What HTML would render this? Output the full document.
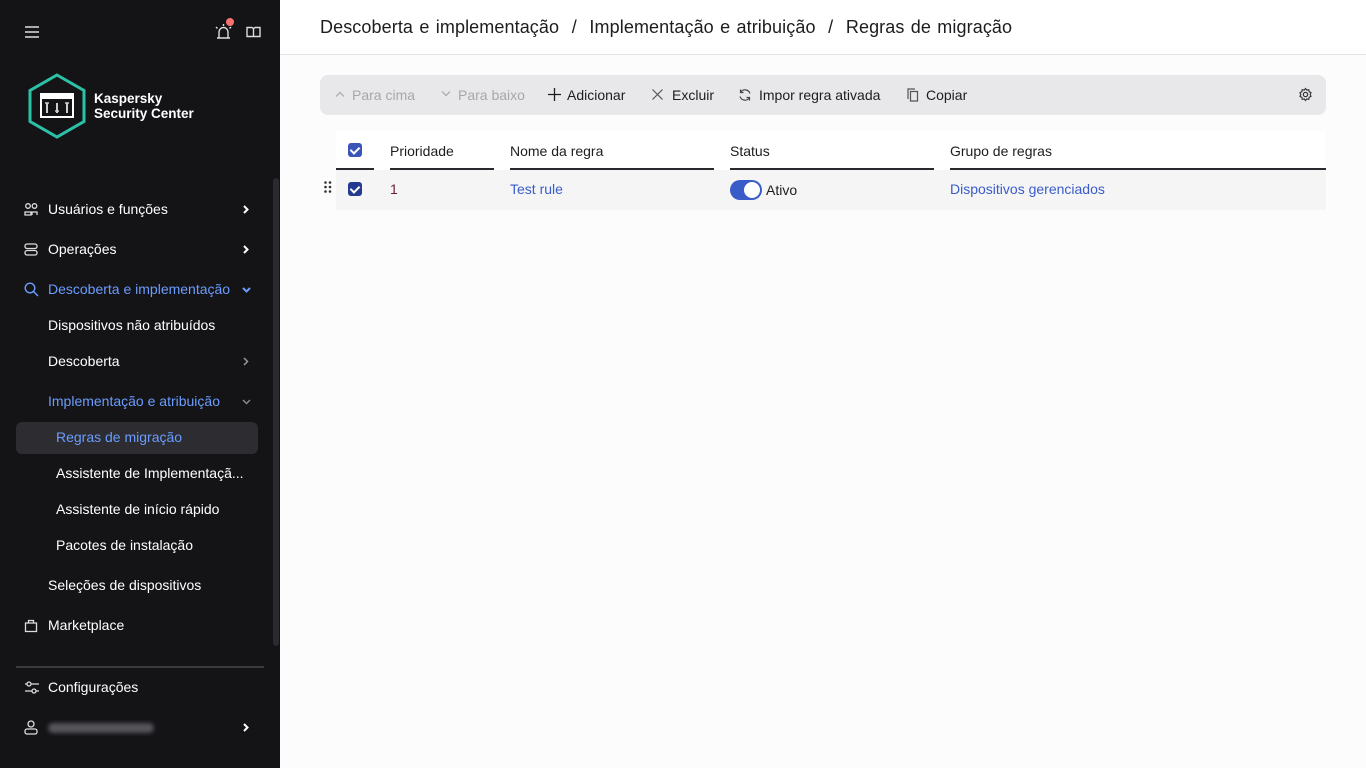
<!DOCTYPE html>
<html><head><meta charset="utf-8"><style>
*{box-sizing:border-box;margin:0;padding:0}
body{width:1366px;height:768px;overflow:hidden;font-family:"Liberation Sans",sans-serif;background:#fcfcfc;position:relative}
#sb{position:absolute;left:0;top:0;width:280px;height:768px;background:#141417;color:#fff;font-size:14px}
.it{position:absolute;left:48px;white-space:nowrap}
.ic{position:absolute;left:24px}
.chev{position:absolute;left:243px}
.blue{color:#6b9cff}
#main{position:absolute;left:280px;top:0;right:0;bottom:0}
#hdr{height:55px;background:#fff;border-bottom:1px solid #e3e3e6;font-size:18px;color:#1d1d1f;padding:17px 0 0 40px;letter-spacing:0.1px;word-spacing:1.2px}
#tb{position:absolute;left:40px;top:75px;width:1006px;height:40px;background:#e8e8eb;border-radius:8px;font-size:14px;color:#1d1d1f}
#tb span{position:absolute;top:12px;white-space:nowrap}
#tb svg{position:absolute;top:14px}
.dis{color:#a6a6ab}
.th{position:absolute;top:143px;font-size:14px;color:#1d1d1f}
.ln{position:absolute;top:168px;height:2px;background:#2a2a2e}
.cb{position:absolute;width:14px;height:14px;border-radius:3px;background:#3a55b8}
.cb:after{content:"";position:absolute;left:4px;top:2px;width:4px;height:7px;border:solid #fff;border-width:0 2px 2px 0;transform:rotate(45deg)}
</style></head><body>
<div id="sb">
<svg style="position:absolute;left:25px;top:26px" width="14" height="12"><path d="M0 1h14M0 6h14M0 11h14" stroke="#ddd" stroke-width="1.6"/></svg>
<svg style="position:absolute;left:213px;top:22px" width="22" height="20"><path d="M4 16h13M6 16v-6a4.5 4.5 0 0 1 9 0v6M10.5 2v2M3 5l1.5 1.5M18 5l-1.5 1.5" stroke="#ddd" stroke-width="1.4" fill="none"/></svg>
<div style="position:absolute;left:226px;top:18px;width:8px;height:8px;border-radius:50%;background:#f87171"></div>
<svg style="position:absolute;left:246px;top:26px" width="15" height="12"><path d="M7.5 2v9M1 1.5h4.5a2 2 0 0 1 2 2 2 2 0 0 1 2-2H14v9H1z" stroke="#ddd" stroke-width="1.4" fill="none"/></svg>
<svg style="position:absolute;left:27px;top:73px" width="60" height="66"><path d="M30 2L57 17.5V48.5L30 64 3 48.5V17.5z" fill="none" stroke="#2bc1a6" stroke-width="3"/><rect x="13" y="20" width="34" height="25" fill="#fff"/><rect x="15" y="26" width="30" height="17" fill="#141417"/><path d="M20 30v10M30 30v10M40 30v10" stroke="#ccc" stroke-width="2"/><path d="M18 30h4M28 38h4M38 30h4" stroke="#ccc" stroke-width="1.5"/></svg>
<div style="position:absolute;left:94px;top:91px;font-weight:bold;font-size:13.5px;line-height:15px">Kaspersky<br>Security Center</div>
<div style="position:absolute;left:273px;top:178px;width:6px;height:468px;background:#2a2a30;border-radius:3px"></div>
<svg class="ic" style="top:203px" width="14" height="13"><circle cx="4" cy="3" r="2.3" stroke="#ddd" fill="none" stroke-width="1.3"/><circle cx="10.5" cy="3" r="2.3" stroke="#ddd" fill="none" stroke-width="1.3"/><path d="M1 12v-3h6v3zM8 12v-3h5v3" stroke="#ddd" fill="none" stroke-width="1.3"/></svg>
<div class="it" style="top:201px">Usuários e funções</div>
<svg class="chev" style="top:205px" width="6" height="9"><path d="M1 1l3.5 3.5L1 8" stroke="#fff" stroke-width="2" fill="none"/></svg>
<svg class="ic" style="top:243px" width="14" height="13"><rect x="1" y="1" width="12" height="4.5" rx="2" stroke="#ddd" fill="none" stroke-width="1.3"/><rect x="1" y="7.5" width="12" height="4.5" rx="2" stroke="#ddd" fill="none" stroke-width="1.3"/></svg>
<div class="it" style="top:241px">Operações</div>
<svg class="chev" style="top:245px" width="6" height="9"><path d="M1 1l3.5 3.5L1 8" stroke="#fff" stroke-width="2" fill="none"/></svg>
<svg class="ic" style="top:282px" width="15" height="15"><circle cx="6" cy="6" r="4.8" stroke="#6b9cff" fill="none" stroke-width="1.4"/><path d="M9.5 9.5L14 14" stroke="#6b9cff" stroke-width="1.4"/></svg>
<div class="it blue" style="top:281px">Descoberta e implementação</div>
<svg style="position:absolute;left:242px;top:287px" width="9" height="6"><path d="M1 1l3.5 3.5L8 1" stroke="#6b9cff" stroke-width="2" fill="none"/></svg>
<div class="it" style="top:317px">Dispositivos não atribuídos</div>
<div class="it" style="top:353px">Descoberta</div>
<svg class="chev" style="top:357px" width="6" height="9"><path d="M1 1l3.5 3.5L1 8" stroke="#999" stroke-width="1.5" fill="none"/></svg>
<div class="it blue" style="top:393px">Implementação e atribuição</div>
<svg style="position:absolute;left:242px;top:399px" width="9" height="6"><path d="M1 1l3.5 3.5L8 1" stroke="#888" stroke-width="1.5" fill="none"/></svg>
<div style="position:absolute;left:16px;top:422px;width:242px;height:32px;background:#2c2c31;border-radius:6px"></div>
<div class="it blue" style="top:429px;left:56px">Regras de migração</div>
<div class="it" style="top:465px;left:56px">Assistente de Implementaçã...</div>
<div class="it" style="top:501px;left:56px">Assistente de início rápido</div>
<div class="it" style="top:537px;left:56px">Pacotes de instalação</div>
<div class="it" style="top:577px">Seleções de dispositivos</div>
<svg class="ic" style="top:618px" width="14" height="15"><path d="M1.5 5h11v8.5h-11zM4.5 5V2.5h5V5" stroke="#ddd" fill="none" stroke-width="1.3"/></svg>
<div class="it" style="top:617px">Marketplace</div>
<div style="position:absolute;left:16px;top:666px;width:248px;height:2px;background:#3a3a3f"></div>
<svg class="ic" style="top:681px" width="15" height="13"><path d="M1 3h14M1 10h14" stroke="#ddd" stroke-width="1.3"/><circle cx="5" cy="3" r="2" fill="#141417" stroke="#ddd" stroke-width="1.3"/><circle cx="10" cy="10" r="2" fill="#141417" stroke="#ddd" stroke-width="1.3"/></svg>
<div class="it" style="top:679px">Configurações</div>
<svg class="ic" style="top:720px" width="14" height="15"><circle cx="7" cy="4" r="3" stroke="#ddd" fill="none" stroke-width="1.3"/><rect x="1" y="9" width="12" height="5" rx="2" stroke="#ddd" fill="none" stroke-width="1.3"/></svg>
<div style="position:absolute;left:48px;top:723px;width:106px;height:10px;background:#55555a;border-radius:5px;filter:blur(2px)"></div>
<svg class="chev" style="top:723px" width="6" height="9"><path d="M1 1l3.5 3.5L1 8" stroke="#fff" stroke-width="2" fill="none"/></svg>
</div>
<div id="main">
<div id="hdr">Descoberta e implementação &nbsp;/ &nbsp;Implementação e atribuição &nbsp;/ &nbsp;Regras de migração</div>
<div id="tb">
<svg style="left:15px;top:16px" width="10" height="6"><path d="M1 5.5L5 1.5l4 4" stroke="#a6a6ab" stroke-width="1.2" fill="none"/></svg>
<span class="dis" style="left:32px">Para cima</span>
<svg style="left:121px;top:16px" width="10" height="6"><path d="M1 .5l4 4 4-4" stroke="#a6a6ab" stroke-width="1.2" fill="none"/></svg>
<span class="dis" style="left:138px">Para baixo</span>
<svg style="left:228px;top:13px" width="13" height="13"><path d="M6.5 0v13M0 6.5h13" stroke="#1d1d1f" stroke-width="1.3"/></svg>
<span style="left:247px">Adicionar</span>
<svg style="left:332px;top:14px" width="11" height="11"><path d="M.5 .5l10 10M10.5 .5l-10 10" stroke="#555" stroke-width="1.2"/></svg>
<span style="left:352px">Excluir</span>
<svg style="left:418px;top:13px" width="14" height="14"><path d="M12 5.5A5.2 5.2 0 0 0 2.5 4.5M2 8.5a5.2 5.2 0 0 0 9.5 1M2.5 1.5v3h3M11.5 12.5v-3h-3" stroke="#444" stroke-width="1.2" fill="none"/></svg>
<span style="left:439px">Impor regra ativada</span>
<svg style="left:587px;top:13px" width="12" height="14"><path d="M3.5 3.5h7v9.5h-7zM1 11V1h7" stroke="#555" stroke-width="1.2" fill="none"/></svg>
<span style="left:606px">Copiar</span>
<svg style="left:978px;top:12px" width="15" height="15" viewBox="0 0 16 16"><circle cx="8" cy="8" r="2.3" stroke="#333" stroke-width="1.3" fill="none"/><path d="M8 1.5l1.3 1.8 2.2-.5.4 2.2 2 1-.9 2 .9 2-2 1-.4 2.2-2.2-.5L8 14.5l-1.3-1.8-2.2.5-.4-2.2-2-1 .9-2-.9-2 2-1 .4-2.2 2.2.5z" stroke="#333" stroke-width="1.2" fill="none"/></svg>
</div>
<div style="position:absolute;left:56px;top:131px;width:990px;height:39px;background:#fff"></div>
<div style="position:absolute;left:56px;top:170px;width:990px;height:40px;background:#f5f5f6"></div>
<div class="cb" style="left:68px;top:143px"></div>
<div class="th" style="left:110px">Prioridade</div>
<div class="th" style="left:230px">Nome da regra</div>
<div class="th" style="left:450px">Status</div>
<div class="th" style="left:670px">Grupo de regras</div>
<div class="ln" style="left:56px;width:38px"></div>
<div class="ln" style="left:110px;width:104px"></div>
<div class="ln" style="left:230px;width:204px"></div>
<div class="ln" style="left:450px;width:204px"></div>
<div class="ln" style="left:670px;width:376px"></div>
<svg style="position:absolute;left:44px;top:181px" width="8" height="12"><g fill="#333"><circle cx="1.5" cy="1.5" r="1.3"/><circle cx="6" cy="1.5" r="1.3"/><circle cx="1.5" cy="6" r="1.3"/><circle cx="6" cy="6" r="1.3"/><circle cx="1.5" cy="10.5" r="1.3"/><circle cx="6" cy="10.5" r="1.3"/></g></svg>
<div class="cb" style="left:68px;top:182px;background:#243a8f"></div>
<div class="th" style="left:110px;top:181px;color:#6b1d3a">1</div>
<div class="th" style="left:230px;top:181px;color:#3a5cc8">Test rule</div>
<div style="position:absolute;left:450px;top:180px;width:32px;height:20px;border-radius:10px;background:#3a5cc8"><div style="position:absolute;right:2px;top:2px;width:16px;height:16px;border-radius:50%;background:#fff"></div></div>
<div class="th" style="left:486px;top:182px">Ativo</div>
<div class="th" style="left:670px;top:181px;color:#3a5cc8">Dispositivos gerenciados</div>
</div>
</body></html>
